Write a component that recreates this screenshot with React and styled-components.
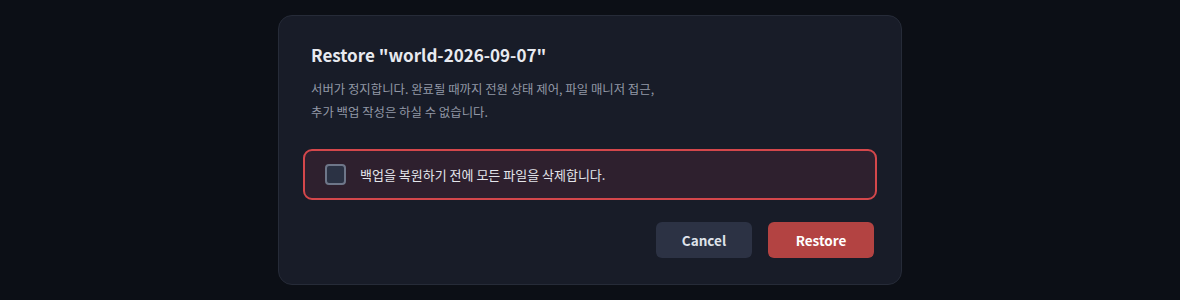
import React, { useState } from "react";
import styled, { createGlobalStyle } from "styled-components";

const Global = createGlobalStyle`
  html, body { margin: 0; padding: 0; background: #0c0f16; }
  body { font-family: "Noto Sans CJK KR", "Noto Sans", sans-serif; }
`;

const Page = styled.div`
  width: 1180px;
  height: 300px;
  background: #0c0f16;
  display: flex;
  justify-content: center;
  align-items: flex-start;
  padding-top: 15px;
  box-sizing: border-box;
`;

const Modal = styled.div`
  width: 624px;
  box-sizing: border-box;
  background: #181c28;
  border: 1px solid #262b38;
  border-radius: 14px;
  padding: 27px 24px 26px 24px;
  display: flex;
  flex-direction: column;
`;

const Title = styled.h2`
  margin: 0 0 0 8px;
  font-size: 17px;
  line-height: 24px;
  font-weight: 700;
  color: #e8eaf0;
`;

const Desc = styled.p`
  margin: 11px 0 0 8px;
  font-size: 12.4px;
  line-height: 23px;
  color: #9298a6;
`;

const Warning = styled.label`
  margin-top: 25px;
  height: 51px;
  box-sizing: border-box;
  border: 2px solid #d4474b;
  border-radius: 9px;
  background: #2e202e;
  display: flex;
  align-items: center;
  gap: 14px;
  padding-left: 20px;
  cursor: pointer;
`;

const Box = styled.span`
  width: 17px;
  height: 17px;
  border: 2px solid #6e7689;
  border-radius: 4px;
  background: ${p => (p.$checked ? "#d4474b" : "#2b3244")};
  flex-shrink: 0;
`;

const WarnText = styled.span`
  font-size: 13px;
  color: #e3e5ea;
`;

const Actions = styled.div`
  margin-top: 22px;
  display: flex;
  justify-content: flex-end;
  gap: 16px;
  padding-right: 3px;
`;

const Button = styled.button`
  height: 36px;
  width: ${p => (p.$primary ? "106px" : "96px")};
  padding: 0;
  border: none;
  border-radius: 6px;
  font-family: "Noto Sans CJK KR", "Noto Sans", sans-serif;
  font-size: 13.5px;
  font-weight: 700;
  color: ${p => (p.$primary ? "#ffffff" : "#dfe2ea")};
  background: ${p => (p.$primary ? "#b34342" : "#2c3244")};
  cursor: pointer;
`;

export default function App() {
  const [checked, setChecked] = useState(false);
  return (
    <Page>
      <Global />
      <Modal>
        <Title>Restore "world-2026-09-07"</Title>
        <Desc>
          서버가 정지합니다. 완료될 때까지 전원 상태 제어, 파일 매니저 접근,
          <br />
          추가 백업 작성은 하실 수 없습니다.
        </Desc>
        <Warning onClick={() => setChecked(c => !c)}>
          <Box $checked={checked} />
          <WarnText>백업을 복원하기 전에 모든 파일을 삭제합니다.</WarnText>
        </Warning>
        <Actions>
          <Button>Cancel</Button>
          <Button $primary>Restore</Button>
        </Actions>
      </Modal>
    </Page>
  );
}
